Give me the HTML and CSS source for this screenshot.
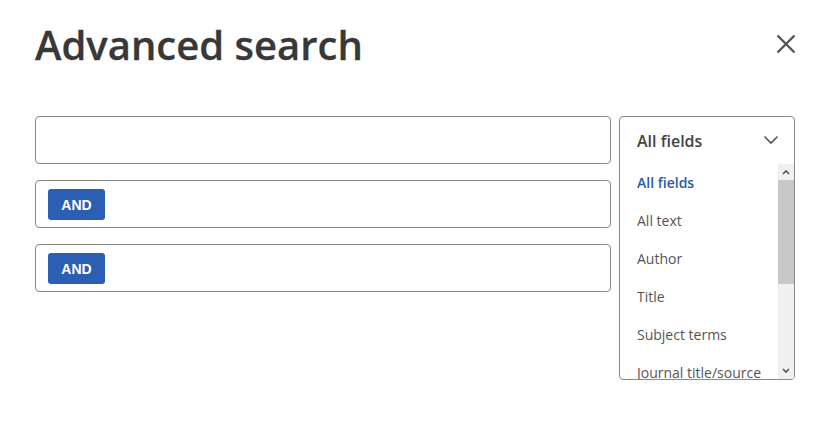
FILE: index.html
```html
<!DOCTYPE html>
<html>
<head>
<meta charset="utf-8">
<link rel="stylesheet" href="styles.css">
</head>
<body>
<div class="dialog">
  <div class="head">
    <h1 class="title">Advanced search</h1>
    <button class="close" aria-label="Close">
      <svg width="20" height="20" viewBox="0 0 20 20"><path d="M1.5 1.5 L18.5 18.5 M18.5 1.5 L1.5 18.5" stroke="#555" stroke-width="2.4" fill="none"/></svg>
    </button>
  </div>
  <div class="form">
    <div class="rows">
      <div class="field"></div>
      <div class="field"><span class="op">AND</span></div>
      <div class="field"><span class="op">AND</span></div>
    </div>
    <div class="select">
      <div class="sel-head">
        <span class="sel-value">All fields</span>
        <svg class="chev" width="16" height="10" viewBox="0 0 16 10"><path d="M1.5 1.5 L8 8 L14.5 1.5" stroke="#555" stroke-width="1.6" fill="none"/></svg>
      </div>
      <div class="sel-body">
        <ul class="options">
          <li class="opt selected">All fields</li>
          <li class="opt">All text</li>
          <li class="opt">Author</li>
          <li class="opt">Title</li>
          <li class="opt">Subject terms</li>
          <li class="opt">Journal title/source</li>
        </ul>
        <div class="scrollbar">
          <div class="sb-btn"><svg width="8" height="6" viewBox="0 0 8 6"><path d="M1 5 L4 2 L7 5" stroke="#555" stroke-width="1.6" fill="none"/></svg></div>
          <div class="sb-track"><div class="sb-thumb"></div></div>
          <div class="sb-btn"><svg width="8" height="6" viewBox="0 0 8 6"><path d="M1 1 L4 4 L7 1" stroke="#555" stroke-width="1.6" fill="none"/></svg></div>
        </div>
      </div>
    </div>
  </div>
</div>
</body>
</html>
```
FILE: styles.css
```css
html, body {
  margin: 0;
  padding: 0;
  background: #fff;
}
body {
  font-family: "Open Sans", "Noto Sans", sans-serif;
  color: #444;
}
.dialog {
  padding: 0 29px 0 35px;
}
.head {
  display: flex;
  justify-content: space-between;
  align-items: flex-start;
  height: 116px;
}
.title {
  margin: 17px 0 0 0;
  font-size: 40px;
  font-weight: 600;
  line-height: 56px;
  color: #383838;
  -webkit-text-stroke: 0.3px #383838;
}
.close {
  margin-top: 34px;
  margin-right: -1px;
  padding: 0;
  border: 0;
  background: none;
  width: 20px;
  height: 20px;
}
.close svg { display: block; }
.form {
  display: grid;
  grid-template-columns: 576px 176px;
  column-gap: 8px;
  align-items: start;
}
.rows {
  display: flex;
  flex-direction: column;
  gap: 16px;
}
.field {
  box-sizing: border-box;
  height: 48px;
  border: 1px solid #8a8a8a;
  border-radius: 4px;
  display: flex;
  align-items: center;
  padding-left: 12px;
}
.op {
  display: inline-flex;
  align-items: center;
  justify-content: center;
  width: 57px;
  height: 31px;
  margin-top: 1px;
  background: #2c5fb3;
  color: #fff;
  border-radius: 3px;
  font-family: "Liberation Sans", Arial, sans-serif;
  font-weight: 700;
  font-size: 14px;
}
.select {
  box-sizing: border-box;
  height: 264px;
  border: 1px solid #8a8a8a;
  border-radius: 4px;
  display: flex;
  flex-direction: column;
  overflow: hidden;
}
.sel-head {
  height: 47px;
  flex: none;
  display: flex;
  align-items: center;
  justify-content: space-between;
  padding: 0 15px 0 17px;
}
.sel-value {
  font-size: 16px;
  font-weight: 600;
  color: #444;
}
.chev { display: block; margin-top: -2px; }
.sel-body {
  flex: 1;
  display: flex;
  min-height: 0;
}
.options {
  list-style: none;
  margin: 0;
  padding: 0;
  flex: 1;
  overflow: hidden;
}
.opt {
  height: 38px;
  line-height: 38px;
  padding-left: 17px;
  font-size: 14px;
  color: #555;
  white-space: nowrap;
}
.opt.selected {
  color: #2c5aa8;
  font-weight: 600;
}
.scrollbar {
  width: 16px;
  flex: none;
  display: flex;
  flex-direction: column;
  background: #f0f0f0;
}
.sb-btn {
  height: 16px;
  flex: none;
  display: flex;
  align-items: center;
  justify-content: center;
  background: #f0f0f0;
}
.sb-btn svg { display: block; }
.sb-track {
  flex: 1;
}
.sb-thumb {
  height: 104px;
  background: #c8c8c8;
}
```
